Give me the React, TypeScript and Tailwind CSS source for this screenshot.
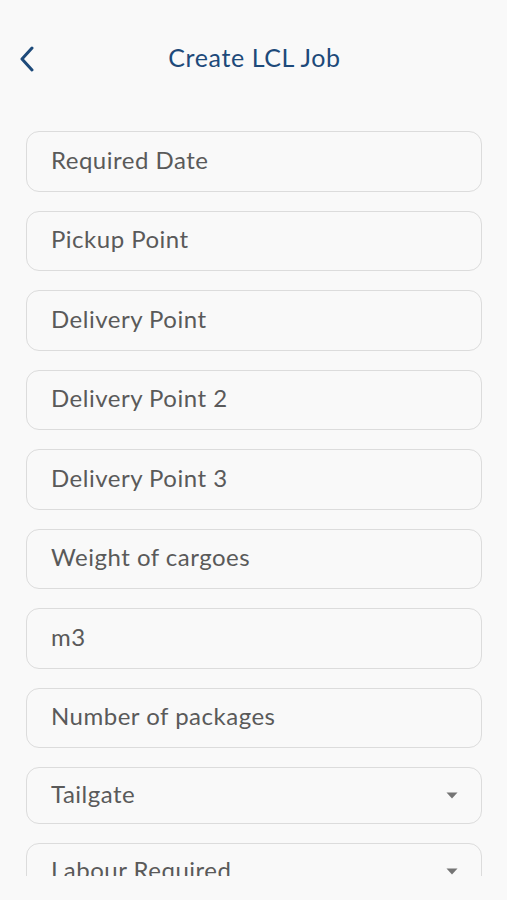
import React from "react";

const fields = [
  "Required Date",
  "Pickup Point",
  "Delivery Point",
  "Delivery Point 2",
  "Delivery Point 3",
  "Weight of cargoes",
  "m3",
  "Number of packages",
];

function Caret() {
  return (
    <svg width="12" height="7" viewBox="0 0 12 7" className="shrink-0">
      <path d="M0.5 0.5 H11.5 L6 6.5 Z" fill="#757575" />
    </svg>
  );
}

export default function App() {
  return (
    <div
      className="w-[507px] h-[900px] bg-[#f9f9f9] overflow-hidden"
      style={{ fontFamily: "Lato, 'Open Sans', sans-serif" }}
    >
      <div className="h-[116px] relative flex items-start justify-center pt-[41px]">
        <svg
          width="16"
          height="26"
          viewBox="0 0 16 26"
          className="absolute left-[19px] top-[46px]"
        >
          <path
            d="M13 2 L3 13 L13 24"
            fill="none"
            stroke="#1d4a7a"
            strokeWidth="3"
            strokeLinecap="round"
            strokeLinejoin="round"
          />
        </svg>
        <div className="text-[25px] text-[#1d4a7a] tracking-[0.6px] leading-[32px] ml-[2px]">
          Create LCL Job
        </div>
      </div>
      <div className="h-[760px] overflow-hidden pl-[26px] pr-[25px] pt-[15px] flex flex-col gap-[19px] w-[507px]">
        {fields.map((f) => (
          <div
            key={f}
            className="h-[60.5px] shrink-0 border border-[#dcdcdc] rounded-[13px] flex items-center pl-[24px] pb-[3px] text-[24px] text-[#5a5a5a] tracking-[0.5px]"
          >
            {f}
          </div>
        ))}
        {["Tailgate", "Labour Required"].map((f) => (
          <div
            key={f}
            className="h-[57px] shrink-0 border border-[#dcdcdc] rounded-[13px] flex items-center justify-between pl-[24px] pr-[23px] text-[24px] text-[#5a5a5a] tracking-[0.5px]"
          >
            <span className="pb-[3px]">{f}</span>
            <Caret />
          </div>
        ))}
      </div>
    </div>
  );
}
